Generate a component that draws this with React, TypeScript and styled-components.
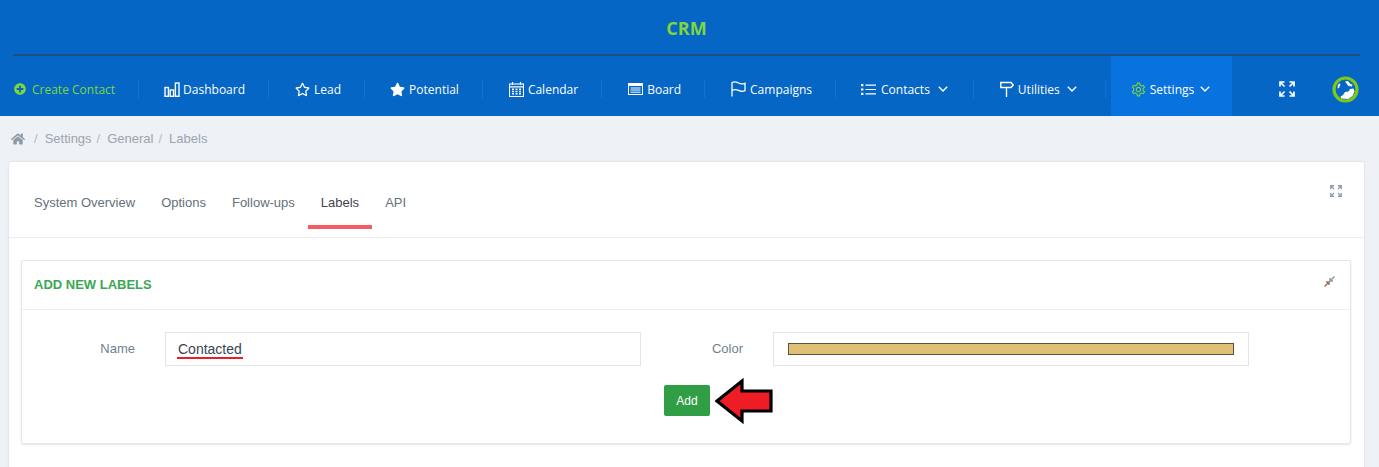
import React from 'react'
import styled, { createGlobalStyle } from 'styled-components'
import { FaStar, FaRegStar, FaHome, FaPlusCircle } from 'react-icons/fa'
import { LiaCogSolid } from 'react-icons/lia'

const GlobalStyle = createGlobalStyle`
  html, body { margin: 0; padding: 0; height: 467px; overflow: hidden; background: #eef1f6; }
  body { font-family: "Liberation Sans", Arial, sans-serif; }
  * { box-sizing: border-box; }
`

// Icons drawn by hand //

const BarsIcon = () => (
  <svg width='16' height='15' viewBox='0 0 16 15' fill='none' stroke='#fff' strokeWidth='1.4'>
    <rect x='1' y='5.5' width='3.4' height='8.8' />
    <rect x='6.2' y='8' width='3.4' height='6.3' />
    <rect x='11.4' y='1' width='3.6' height='13.3' />
  </svg>
)

const CalendarIcon = () => (
  <svg width='15' height='15' viewBox='0 0 15 15' fill='none' stroke='#fff'>
    <rect x='.5' y='2' width='14' height='12.5' strokeWidth='1.1' />
    <path d='M3.5 0v3M11.5 0v3M.5 4.8h14' strokeWidth='1.2' />
    <path d='M3 7.3h2M6.5 7.3h2M10 7.3h2M3 9.5h2M6.5 9.5h2M10 9.5h2M3 11.8h2M6.5 11.8h2M10 11.8h2' strokeWidth='1.4' />
  </svg>
)

const BoardIcon = () => (
  <svg width='15' height='12' viewBox='0 0 15 12' fill='none' stroke='#fff'>
    <rect x='.5' y='.5' width='14' height='11' strokeWidth='1' />
    <path d='M.5 2h14' strokeWidth='2' />
    <path d='M2.5 5h10M2.5 7h10M2.5 9.2h10' strokeWidth='1' />
  </svg>
)

const FlagIcon = () => (
  <svg width='15' height='16' viewBox='0 0 15 16' fill='none' stroke='#fff' strokeWidth='1.3'>
    <path d='M1 15.5V1.2' />
    <path d='M1 1.5C3.5.4 5.500 1 7.500 2s4 1.300 6.500.3v7.400c-2.500 1-4.500.7-6.500-.3S3.500 8.300 1 9.300' />
  </svg>
)

const ListIcon = () => (
  <svg width='15' height='11' viewBox='0 0 15 11' fill='none' stroke='#fff'>
    <path d='M0 1.2h2.4M0 5.5h2.4M0 9.8h2.4' strokeWidth='2.2' />
    <path d='M4.5 1.2H15M4.5 5.5H15M4.5 9.8H15' strokeWidth='1.2' />
  </svg>
)

const SignIcon = () => (
  <svg width='14' height='16' viewBox='0 0 14 16' fill='none' stroke='#fff' strokeWidth='1.4'>
    <path d='M.8 1.5h10.2L13.2 4 11 6.5H.8z' />
    <path d='M6.5 6.5v9.5' />
  </svg>
)

const ChevronIcon = () => (
  <ChevronSvg width='10' height='6' viewBox='0 0 10 6' fill='none' stroke='#fff' strokeWidth='1.4'>
    <path d='M.8.8L5 5l4.200-4.200' />
  </ChevronSvg>
)

const ExpandIcon = (props: { size: number; color: string }) => (
  <svg width={props.size} height={props.size} viewBox='0 0 16 16' fill='none' stroke={props.color} strokeWidth='1.7'>
    <path d='M1 5.5V1h4.5M1.2 1.2l4.3 4.3' />
    <path d='M15 5.5V1h-4.5M14.8 1.2l-4.3 4.3' />
    <path d='M1 10.5V15h4.5M1.2 14.8l4.3-4.3' />
    <path d='M15 10.5V15h-4.5M14.8 14.8l-4.3-4.3' />
  </svg>
)

const CollapseIcon = () => (
  <svg width='11' height='11' viewBox='0 0 11 11' fill='none' strokeWidth='1.5'>
    <path d='M10.5.5L6.5 4.5M6 2v3h3' stroke='#8f9aa6' />
    <path d='M.5 10.5l4-4M2 6h3v3' stroke='#a5705f' />
  </svg>
)

const GlobeAvatar = () => (
  <svg width='27' height='27' viewBox='0 0 27 27'>
    <circle cx='13.5' cy='13.5' r='11.5' fill='#0566c6' stroke='#7fc814' strokeWidth='3.2' />
    <path d='M13 5.5l3-.5 2.5 3 2 .5-.5 2-3.5-.5-2-2.500zM7 7.500l1.500.5-1.500 4-1.500.5.300-3zM21.500 12.500l1 3-2 4.500-4.500 3-6.500-.5-1-2 2.500-1.500 2-3 3.500-.5 1.500-2.500z' fill='#fff' />
  </svg>
)

const AddArrow = () => (
  <svg width='58' height='48' viewBox='0 0 58 48'>
    <path d='M2 24L27 4v10h29v20H27v10z' fill='#ee1c25' stroke='#000' strokeWidth='3.2' strokeLinejoin='miter' />
  </svg>
)

/////////////////////////////////////////////////////////////////////////////

const NAV_ITEMS = [
  { label: 'Dashboard', icon: <BarsIcon />, pad: 25, end: 23, gap: 3 },
  { label: 'Lead', icon: <FaRegStar size={15} />, pad: 26, end: 23, gap: 4 },
  { label: 'Potential', icon: <FaStar size={15} />, pad: 25, end: 23, gap: 4 },
  { label: 'Calendar', icon: <CalendarIcon />, pad: 26, end: 23, gap: 4 },
  { label: 'Board', icon: <BoardIcon />, pad: 26, end: 23, gap: 4 },
  { label: 'Campaigns', icon: <FlagIcon />, pad: 26, end: 23, gap: 4 },
  { label: 'Contacts', icon: <ListIcon />, pad: 25, end: 25, gap: 5, caret: true },
  { label: 'Utilities', icon: <SignIcon />, pad: 26, end: 28, gap: 4, caret: true },
]

const TABS = ['System Overview', 'Options', 'Follow-ups', 'Labels', 'API']
const CRUMBS = ['Settings', 'General', 'Labels']

const App: React.FC = () => {
  return (
    <>
      <GlobalStyle />
      <Header>
        <TitleRow>
          <Title>CRM</Title>
        </TitleRow>
        <Nav>
          <CreateLink>
            <FaPlusCircle size={12} />
            Create Contact
          </CreateLink>
          {NAV_ITEMS.map(item => (
            <NavItem key={item.label} $pad={item.pad} $end={item.end} $gap={item.gap}>
              {item.icon}
              {item.label}
              {item.caret ? <ChevronIcon /> : null}
            </NavItem>
          ))}
          <SettingsItem>
            <LiaCogSolid size={17} color='#7fd63a' />
            Settings
            <ChevronIcon />
          </SettingsItem>
          <NavTools>
            <ExpandIcon size={16} color='#fff' />
            <GlobeAvatar />
          </NavTools>
        </Nav>
      </Header>

      <Breadcrumb>
        <FaHome size={14} color='#8d9aa5' />
        {CRUMBS.map(crumb => (
          <Crumb key={crumb}>
            <span>/</span>
            {crumb}
          </Crumb>
        ))}
      </Breadcrumb>

      <Card>
        <TabBar>
          {TABS.map(tab => (
            <Tab key={tab} $active={tab === 'Labels'}>
              {tab}
            </Tab>
          ))}
          <TabTools>
            <ExpandIcon size={12} color='#8f9aa6' />
          </TabTools>
        </TabBar>
        <CardBody>
          <Panel>
            <PanelHead>
              <PanelTitle>ADD NEW LABELS</PanelTitle>
              <CollapseIcon />
            </PanelHead>
            <PanelBody>
              <FormRow>
                <FieldLabel>Name</FieldLabel>
                <TextField>
                  <Underlined>Contacted</Underlined>
                </TextField>
                <FieldLabel>Color</FieldLabel>
                <ColorField>
                  <Swatch />
                </ColorField>
              </FormRow>
              <Actions>
                <AddButton>Add</AddButton>
                <ArrowMark>
                  <AddArrow />
                </ArrowMark>
              </Actions>
            </PanelBody>
          </Panel>
        </CardBody>
      </Card>
    </>
  )
}

// Styles

const Header = styled.header`
  background: #0566c6;
  height: 116px;
  color: #fff;
`

const TitleRow = styled.div`
  margin: 0 19px 0 13px;
  height: 56px;
  border-bottom: 2px solid #1c4f85;
  display: flex;
  align-items: center;
  justify-content: center;
`

const Title = styled.div`
  font-family: 'Open Sans', sans-serif;
  font-size: 18px;
  font-weight: 700;
  color: #7fd63a;
  margin-top: 2px;
`

const Nav = styled.nav`
  height: 60px;
  display: flex;
  align-items: center;
  padding-left: 14px;
  font-family: 'Open Sans', sans-serif;
  font-size: 12px;
`

const CreateLink = styled.a`
  display: flex;
  align-items: center;
  gap: 6px;
  margin-top: 6px;
  color: #7fd63a;
  height: 18px;
  padding-right: 23px;
  border-right: 1px solid #0c74dc;
  white-space: nowrap;
`

const NavItem = styled.a<{ $pad: number; $end: number; $gap: number }>`
  display: flex;
  align-items: center;
  gap: ${props => props.$gap}px;
  height: 18px;
  margin-top: 6px;
  color: #fff;
  padding: 0 ${props => props.$end}px 0 ${props => props.$pad}px;
  border-right: 1px solid #0c74dc;
  white-space: nowrap;
`

const ChevronSvg = styled.svg`
  margin-left: 3px;
  flex: none;
`

const SettingsItem = styled.a`
  margin-left: 5px;
  width: 121px;
  height: 60px;
  padding: 6px 0 0 19px;
  background: #0873de;
  display: flex;
  align-items: center;
  gap: 3px;
  color: #fff;
`

const NavTools = styled.div`
  margin: 6px 0 0 47px;
  width: 80px;
  display: flex;
  align-items: center;
  justify-content: space-between;
`

const Breadcrumb = styled.div`
  height: 45px;
  margin-bottom: 1px;
  padding: 0 0 0 11px;
  display: flex;
  align-items: center;
  color: #9aa5af;
  font-size: 13px;
`

const Crumb = styled.div`
  display: flex;
  gap: 7px;
  margin-left: 5px;

  &:first-of-type {
    margin-left: 9px;
  }

  span {
    color: #b4bcc4;
  }
`

const Card = styled.section`
  margin: 0 15px 0 9px;
  background: #fff;
  height: 320px;
  border-radius: 2px;
  box-shadow: 0 0 2px rgba(120, 130, 140, 0.3);
`

const TabBar = styled.div`
  height: 76px;
  padding-left: 12px;
  display: flex;
  border-bottom: 1px solid #ebedf0;
  position: relative;
`

const Tab = styled.div<{ $active: boolean }>`
  margin-top: 26px;
  padding: 6px 13px 0;
  height: 41px;
  font-size: 13px;
  line-height: 18px;
  color: ${props => (props.$active ? '#3f4550' : '#66707a')};
  border-bottom: 4px solid ${props => (props.$active ? '#f95b62' : 'transparent')};
`

const TabTools = styled.div`
  position: absolute;
  top: 21px;
  right: 22px;
`

const CardBody = styled.div`
  padding: 22px 13px 0 12px;
`

const Panel = styled.div`
  height: 184px;
  border: 1px solid #e3e6ea;
  border-radius: 2px;
  box-shadow: 0 1px 2px rgba(120, 130, 140, 0.2);
`

const PanelHead = styled.div`
  height: 49px;
  padding: 0 15px 7px 12px;
  display: flex;
  align-items: center;
  justify-content: space-between;
  border-bottom: 1px solid #ebedf0;
`

const PanelTitle = styled.h3`
  margin: 5px 0 0;
  font-size: 13px;
  font-weight: 700;
  color: #3ba755;
`

const PanelBody = styled.div`
  padding-top: 22px;
`

const FormRow = styled.div`
  display: grid;
  grid-template-columns: 113px 476px 72px 476px;
  column-gap: 30px;
  align-items: center;
  justify-content: start;
`

const FieldLabel = styled.label`
  font-size: 13px;
  margin-bottom: 2px;
  color: #6f7f8f;
  text-align: right;
`

const TextField = styled.div`
  height: 34px;
  border: 1px solid #e5e5e5;
  padding-left: 11px;
  display: flex;
  align-items: center;
  font-size: 14px;
  color: #3a4450;
`

const Underlined = styled.span`
  border-bottom: 2px solid #ee1c25;
  padding: 0 1px;
  line-height: 15px;
  margin-top: 3px;
`

const ColorField = styled.div`
  height: 34px;
  border: 1px solid #e5e5e5;
  padding: 0 14px;
  display: flex;
  align-items: center;
`

const Swatch = styled.div`
  width: 100%;
  height: 12px;
  background: #e0c074;
  border: 1px solid #5a5240;
`

const Actions = styled.div`
  margin-top: 19px;
  display: flex;
  justify-content: center;
  position: relative;
`

const AddButton = styled.button`
  width: 46px;
  height: 31px;
  margin-left: 2px;
  border: none;
  border-radius: 2px;
  background: #2f9e44;
  color: #fff;
  font-family: 'Liberation Sans', Arial, sans-serif;
  font-size: 12px;
`

const ArrowMark = styled.div`
  position: absolute;
  left: 693px;
  top: -8px;
  line-height: 0;
`

export default App
